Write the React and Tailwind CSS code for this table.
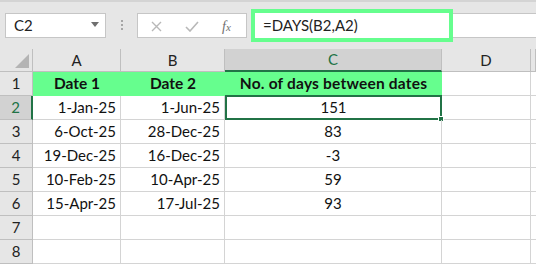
import React from "react";

const COLS = ["A", "B", "C", "D", ""];
const rows = [
  ["1-Jan-25", "1-Jun-25", "151"],
  ["6-Oct-25", "28-Dec-25", "83"],
  ["19-Dec-25", "16-Dec-25", "-3"],
  ["10-Feb-25", "10-Apr-25", "59"],
  ["15-Apr-25", "17-Jul-25", "93"],
  ["", "", ""],
  ["", "", ""],
];

const font = { fontFamily: "Lato, 'Noto Sans', sans-serif" };

function Toolbar() {
  return (
    <div className="h-[49px] bg-[#e6e6e6] border-t-2 border-[#d4d4d4] relative">
      {/* name box */}
      <div className="absolute left-[5px] top-[11px] w-[101px] h-[25px] bg-white border border-[#c6c6c6] flex items-center pl-[8px] text-[15px] text-[#222]">
        C2
        <svg className="absolute right-[6px] top-[8px]" width="8" height="5" viewBox="0 0 8 5">
          <path d="M0 0h8L4 5z" fill="#6f6f6f" />
        </svg>
      </div>
      {/* grip dots */}
      <div className="absolute left-[121px] top-[18px] flex flex-col gap-[2px]">
        <div className="w-[2px] h-[2px] bg-[#a6a6a6]" />
        <div className="w-[2px] h-[2px] bg-[#a6a6a6]" />
        <div className="w-[2px] h-[2px] bg-[#a6a6a6]" />
      </div>
      {/* cancel / enter / fx */}
      <div className="absolute left-[137px] top-[11px] w-[110px] h-[25px] bg-white border border-[#c6c6c6] flex items-center">
        <svg className="absolute left-[13px] top-[7px]" width="11" height="11" viewBox="0 0 11 11">
          <path d="M1 1l9 9M10 1l-9 9" stroke="#b8b8b8" strokeWidth="1.4" />
        </svg>
        <svg className="absolute left-[47px] top-[7px]" width="14" height="11" viewBox="0 0 14 11">
          <path d="M1 6l4 4 8-9" stroke="#b8b8b8" strokeWidth="1.6" fill="none" />
        </svg>
        <span
          className="absolute left-[84px] top-[2px] text-[14px] italic text-[#6f6f6f]"
          style={{ fontFamily: "'Liberation Serif', serif" }}
        >
          f<span className="text-[11px]">x</span>
        </span>
      </div>
      {/* formula bar */}
      <div className="absolute left-[452px] right-0 top-[11px] h-[25px] bg-white border-y border-[#c6c6c6]" />
      <div className="absolute left-[251px] top-[7px] w-[202px] h-[33px] bg-white border-4 border-[#66fe8e] flex items-center pl-[8px] text-[15px] text-[#222]">
        =DAYS(B2,A2)
      </div>
    </div>
  );
}

export default function App() {
  const colW = ["w-[88px]", "w-[104px]", "w-[217px]", "w-[89px]", "w-[5px]"];
  return (
    <div className="w-[536px] h-[265px] overflow-hidden bg-white" style={font}>
      <Toolbar />
      {/* column headers */}
      <div className="flex h-[23px] bg-[#e6e6e6]">
        <div className="w-[33px] shrink-0 border-r border-b border-[#bfbfbf] relative">
          <svg className="absolute right-[3px] bottom-[3px]" width="14" height="14" viewBox="0 0 14 14">
            <path d="M14 0v14H0z" fill="#b4b4b4" />
          </svg>
        </div>
        {COLS.map((c, i) => (
          <div
            key={i}
            className={`${colW[i]} shrink-0 flex items-center justify-center text-[15px] border-r border-[#bfbfbf] ${
              c === "C"
                ? "bg-[#d2d2d2] text-[#217346] border-b-2 border-b-[#217346]"
                : "text-[#222] border-b border-b-[#bfbfbf]"
            }`}
          >
            {c}
          </div>
        ))}
      </div>
      {/* row 1 */}
      <div className="flex h-[24px]">
        <div className="w-[33px] shrink-0 bg-[#e6e6e6] border-r border-b border-[#bfbfbf] flex items-center justify-center text-[15px] text-[#222]">
          1
        </div>
        <div className="w-[409px] shrink-0 flex bg-[#66fe8e] font-bold text-[15.5px] text-[#111]">
          <div className="w-[88px] flex items-center justify-center">Date 1</div>
          <div className="w-[104px] flex items-center justify-center">Date 2</div>
          <div className="w-[217px] flex items-center justify-center tracking-[0.2px]">No. of days between dates</div>
        </div>
        <div className="w-[89px] shrink-0 border-r border-b border-[#d4d4d4]" />
        <div className="w-[5px] shrink-0 border-b border-[#d4d4d4]" />
      </div>
      {rows.map((r, idx) => {
        const n = idx + 2;
        const sel = n === 2;
        return (
          <div key={n} className="flex h-[24px] text-[15px] text-[#111]">
            <div
              className={`w-[33px] shrink-0 border-b border-[#bfbfbf] flex items-center justify-center ${
                sel
                  ? "bg-[#d2d2d2] text-[#217346] border-r-2 border-r-[#217346]"
                  : "bg-[#e6e6e6] text-[#222] border-r border-r-[#bfbfbf]"
              }`}
            >
              {n}
            </div>
            <div className="w-[88px] shrink-0 border-r border-b border-[#d4d4d4] flex items-center justify-end pr-[4px]">
              {r[0]}
            </div>
            <div className="w-[104px] shrink-0 border-r border-b border-[#d4d4d4] flex items-center justify-end pr-[4px]">
              {r[1]}
            </div>
            <div
              className={`w-[217px] shrink-0 flex items-center justify-center relative ${
                sel ? "border-2 border-[#217346] -mt-[1px] h-[25px]" : "border-r border-b border-[#d4d4d4]"
              }`}
            >
              {r[2]}
              {sel && (
                <div className="absolute -right-[4px] -bottom-[4px] w-[6px] h-[6px] bg-[#217346] border border-white" />
              )}
            </div>
            <div className="w-[89px] shrink-0 border-r border-b border-[#d4d4d4]" />
            <div className="w-[5px] shrink-0 border-b border-[#d4d4d4]" />
          </div>
        );
      })}
    </div>
  );
}
